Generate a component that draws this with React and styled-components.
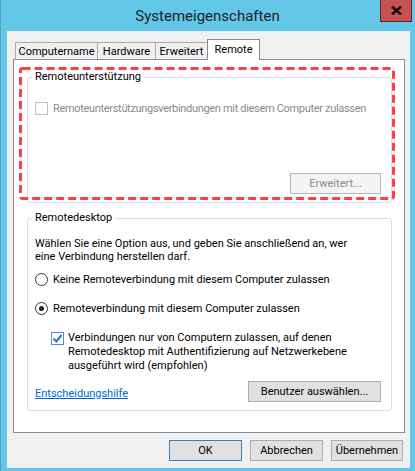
import styled, { createGlobalStyle } from "styled-components";

//Global reset
const GlobalStyle = createGlobalStyle`
  body {
    margin: 0;
    font-family: Roboto, "Liberation Sans", Arial, sans-serif;
    font-size: 11px;
    color: #000;
  }
`;

const tabs = [
  { label: "Computername", width: 83 },
  { label: "Hardware", width: 59 },
  { label: "Erweitert", width: 53 },
  { label: "Remote", width: 53, active: true },
];

function CheckMark() {
  return (
    <svg width="11" height="11" viewBox="0 0 11 11">
      <path
        d="M1.5 5.5 L4.3 8.4 L9.6 2"
        fill="none"
        stroke="#2a78d0"
        strokeWidth="2"
      />
    </svg>
  );
}

function CloseGlyph() {
  return (
    <svg width="11" height="9" viewBox="0 0 11 9">
      <path d="M1 0.5 L10 8.5 M10 0.5 L1 8.5" stroke="#111" strokeWidth="2.4" />
    </svg>
  );
}

function App() {
  return (
    <>
      <GlobalStyle />
      <Window>
        <TitleBar>
          <Title>Systemeigenschaften</Title>
          <CloseButton>
            <CloseGlyph />
          </CloseButton>
        </TitleBar>
        <Body>
          <TabStrip>
            {tabs.map((t) => (
              <Tab key={t.label} $w={t.width} $active={t.active}>
                {t.label}
              </Tab>
            ))}
          </TabStrip>
          <Panel>
            <Group>
              <Legend>Remoteunterstützung</Legend>
              <OptionRow $disabled>
                <CheckBox $disabled />
                Remoteunterstützungsverbindungen mit diesem Computer zulassen
              </OptionRow>
              <GroupButtonRow $gap={57}>
                <Button $disabled>Erweitert...</Button>
              </GroupButtonRow>
            </Group>

            <Group $top={8}>
              <Legend>Remotedesktop</Legend>
              <Intro>
                Wählen Sie eine Option aus, und geben Sie anschließend an, wer
                <br />
                eine Verbindung herstellen darf.
              </Intro>
              <OptionRow $mt={9}>
                <Radio />
                Keine Remoteverbindung mit diesem Computer zulassen
              </OptionRow>
              <OptionRow $mt={14}>
                <Radio $checked />
                Remoteverbindung mit diesem Computer zulassen
              </OptionRow>
              <SubOption>
                <CheckBox $checked>
                  <CheckMark />
                </CheckBox>
                <span>
                  Verbindungen nur von Computern zulassen, auf denen
                  <br />
                  Remotedesktop mit Authentifizierung auf Netzwerkebene
                  <br />
                  ausgeführt wird (empfohlen)
                </span>
              </SubOption>
              <FooterRow>
                <HelpLink href="#">Entscheidungshilfe</HelpLink>
                <Button $w={133}>Benutzer auswählen...</Button>
              </FooterRow>
            </Group>

            <Highlight width="376" height="133">
              <rect
                x="1.5"
                y="1.5"
                width="373"
                height="130"
                rx="2"
                fill="none"
                stroke="#ff3f46"
                strokeWidth="3"
                strokeDasharray="8 4"
              />
            </Highlight>
          </Panel>
          <DialogButtons>
            <Button $w={73} $default>
              OK
            </Button>
            <Button $w={73}>Abbrechen</Button>
            <Button $w={72}>Übernehmen</Button>
          </DialogButtons>
        </Body>
      </Window>
    </>
  );
}

const Window = styled.div`
  width: 415px;
  height: 471px;
  box-sizing: border-box;
  background: #63c7e9;
  border-left: 1px solid #5a9fb8;
  display: flex;
  flex-direction: column;
  padding-bottom: 3px;
`;

const TitleBar = styled.div`
  height: 31px;
  flex: none;
  display: grid;
  grid-template-columns: 1fr auto 1fr;
  padding-right: 3px;
`;

const Title = styled.div`
  grid-column: 2;
  align-self: center;
  font-size: 15px;
  color: #1b1f24;
  padding-left: 2px;
`;

const CloseButton = styled.div`
  grid-column: 3;
  justify-self: end;
  width: 32px;
  height: 22px;
  box-sizing: border-box;
  background: #c75050;
  border: 1px solid #5a2a2a;
  border-top: none;
  display: flex;
  align-items: center;
  justify-content: center;
`;

const Body = styled.div`
  flex: 1;
  margin: 0 5px 0 6px;
  background: #f0f0f0;
  padding: 8px 5px 0 6px;
  display: flex;
  flex-direction: column;
`;

const TabStrip = styled.div`
  height: 20px;
  display: flex;
  align-items: flex-end;
  padding-left: 2px;
`;

const Tab = styled.div`
  width: ${(p) => p.$w}px;
  height: ${(p) => (p.$active ? 21 : 17)}px;
  box-sizing: border-box;
  margin-left: -1px;
  margin-bottom: ${(p) => (p.$active ? -1 : 0)}px;
  position: relative;
  z-index: ${(p) => (p.$active ? 2 : 0)};
  border: 1px solid ${(p) => (p.$active ? "#898c95" : "#acacac")};
  border-bottom: none;
  background: ${(p) => (p.$active ? "#fff" : "#f0f0f0")};
  display: flex;
  align-items: center;
  justify-content: center;
  padding-bottom: ${(p) => (p.$active ? 2 : 0)}px;
  &:first-child {
    margin-left: 0;
  }
`;

const Panel = styled.div`
  height: 374px;
  box-sizing: border-box;
  background: #fff;
  border: 1px solid #898c95;
  padding: 0 12px 0 13px;
  position: relative;
`;

const Group = styled.fieldset`
  margin: ${(p) => p.$top ?? 10}px 0 0 0;
  min-inline-size: 0;
  border: 1px solid #d5dfe5;
  border-radius: 3px;
  padding: 0 10px 8px 7px;
  display: flex;
  flex-direction: column;
`;

const Legend = styled.legend`
  padding: 0 3px;
  margin-left: -3px;
  line-height: 14px;
`;

const OptionRow = styled.label`
  display: flex;
  align-items: center;
  gap: 5px;
  height: 15px;
  white-space: nowrap;
  margin-top: ${(p) => p.$mt ?? 17}px;
  color: ${(p) => (p.$disabled ? "#8a8a8a" : "#000")};
  letter-spacing: ${(p) => (p.$disabled ? "-0.32px" : "normal")};
`;

const CheckBox = styled.span`
  width: 13px;
  height: 13px;
  box-sizing: border-box;
  flex: none;
  background: #fff;
  border: 1px solid
    ${(p) => (p.$disabled ? "#c2c2c2" : p.$checked ? "#4a8fd6" : "#333")};
  display: flex;
  align-items: center;
  justify-content: center;
`;

const Radio = styled.span`
  width: 13px;
  height: 13px;
  box-sizing: border-box;
  flex: none;
  border-radius: 50%;
  border: 1px solid #333;
  background: #fff;
  display: flex;
  align-items: center;
  justify-content: center;
  &::after {
    content: "";
    width: 5px;
    height: 5px;
    border-radius: 50%;
    background: #222;
    display: ${(p) => (p.$checked ? "block" : "none")};
  }
`;

const GroupButtonRow = styled.div`
  display: flex;
  justify-content: flex-end;
  margin-top: ${(p) => p.$gap}px;
`;

const Button = styled.button`
  width: ${(p) => p.$w ?? 91}px;
  height: 21px;
  box-sizing: border-box;
  padding: 0;
  font: inherit;
  color: ${(p) => (p.$disabled ? "#8a8a8a" : "#000")};
  background: ${(p) => (p.$disabled ? "#f4f4f4" : "#e1e1e1")};
  border: 1px solid
    ${(p) => (p.$default ? "#3c7fb1" : p.$disabled ? "#b5b5b5" : "#adadad")};
  border-radius: 0;
`;

const Intro = styled.p`
  margin: 12px 0 0 0;
  line-height: 13px;
`;

const SubOption = styled.label`
  display: flex;
  align-items: flex-start;
  gap: 4px;
  margin: 15px 0 0 16px;
  line-height: 14px;
  ${CheckBox} {
    margin-top: 1px;
  }
`;

const FooterRow = styled.div`
  display: flex;
  align-items: center;
  justify-content: space-between;
  margin-top: 8px;
`;

const HelpLink = styled.a`
  color: #0066cc;
  text-decoration: underline;
  margin-top: 3px;
`;

const Highlight = styled.svg`
  position: absolute;
  left: 5px;
  top: 7px;
  pointer-events: none;
`;

const DialogButtons = styled.div`
  display: flex;
  justify-content: flex-end;
  gap: 8px;
  margin-top: 7px;
  padding-right: 2px;
`;

export default App;
